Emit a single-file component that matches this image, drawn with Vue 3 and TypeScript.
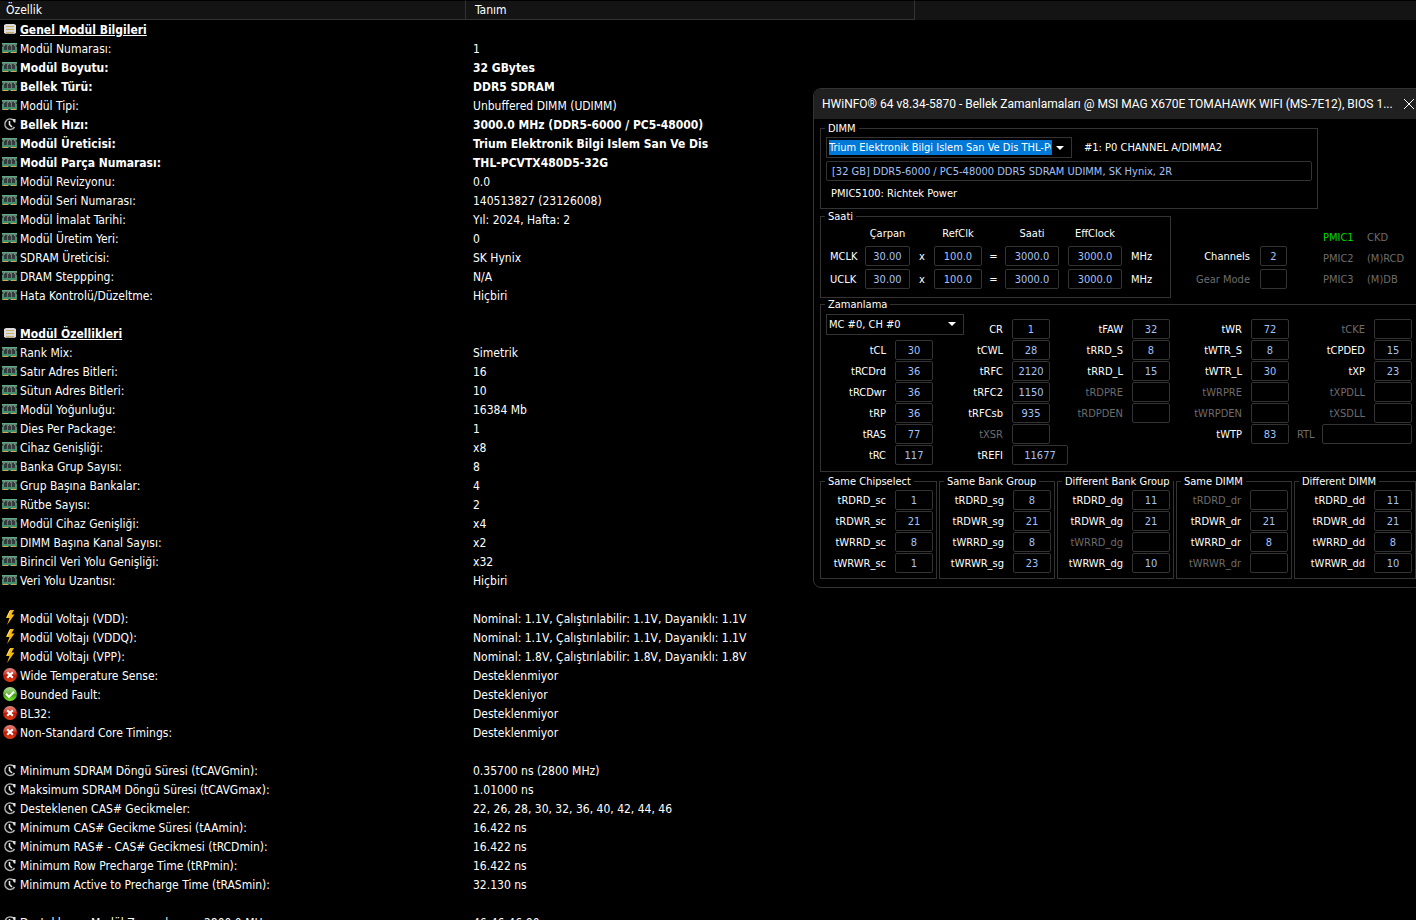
<script setup lang="ts">
type IconName = 'disc' | 'ram' | 'clock' | 'bolt' | 'cross' | 'tick'

interface Row {
  icon?: IconName
  name?: string
  value?: string
  bold?: boolean
  heading?: boolean
}

interface Field {
  label: string
  value: string
  col: number
  row: number
  wide?: boolean
}

const ram = (name: string, value: string, bold = false): Row => ({ icon: 'ram', name, value, bold })
const clock = (name: string, value: string, bold = false): Row => ({ icon: 'clock', name, value, bold })

const rows: Row[] = [
  { icon: 'disc', name: 'Genel Modül Bilgileri', heading: true },
  ram('Modül Numarası:', '1'),
  ram('Modül Boyutu:', '32 GBytes', true),
  ram('Bellek Türü:', 'DDR5 SDRAM', true),
  ram('Modül Tipi:', 'Unbuffered DIMM (UDIMM)'),
  clock('Bellek Hızı:', '3000.0 MHz (DDR5-6000 / PC5-48000)', true),
  ram('Modül Üreticisi:', 'Trium Elektronik Bilgi Islem San Ve Dis', true),
  ram('Modül Parça Numarası:', 'THL-PCVTX480D5-32G', true),
  ram('Modül Revizyonu:', '0.0'),
  ram('Modül Seri Numarası:', '140513827 (23126008)'),
  ram('Modül İmalat Tarihi:', 'Yıl: 2024, Hafta: 2'),
  ram('Modül Üretim Yeri:', '0'),
  ram('SDRAM Üreticisi:', 'SK Hynix'),
  ram('DRAM Steppping:', 'N/A'),
  ram('Hata Kontrolü/Düzeltme:', 'Hiçbiri'),
  {},
  { icon: 'disc', name: 'Modül Özellikleri', heading: true },
  ram('Rank Mix:', 'Simetrik'),
  ram('Satır Adres Bitleri:', '16'),
  ram('Sütun Adres Bitleri:', '10'),
  ram('Modül Yoğunluğu:', '16384 Mb'),
  ram('Dies Per Package:', '1'),
  ram('Cihaz Genişliği:', 'x8'),
  ram('Banka Grup Sayısı:', '8'),
  ram('Grup Başına Bankalar:', '4'),
  ram('Rütbe Sayısı:', '2'),
  ram('Modül Cihaz Genişliği:', 'x4'),
  ram('DIMM Başına Kanal Sayısı:', 'x2'),
  ram('Birincil Veri Yolu Genişliği:', 'x32'),
  ram('Veri Yolu Uzantısı:', 'Hiçbiri'),
  {},
  { icon: 'bolt', name: 'Modül Voltajı (VDD):', value: 'Nominal: 1.1V, Çalıştırılabilir: 1.1V, Dayanıklı: 1.1V' },
  { icon: 'bolt', name: 'Modül Voltajı (VDDQ):', value: 'Nominal: 1.1V, Çalıştırılabilir: 1.1V, Dayanıklı: 1.1V' },
  { icon: 'bolt', name: 'Modül Voltajı (VPP):', value: 'Nominal: 1.8V, Çalıştırılabilir: 1.8V, Dayanıklı: 1.8V' },
  { icon: 'cross', name: 'Wide Temperature Sense:', value: 'Desteklenmiyor' },
  { icon: 'tick', name: 'Bounded Fault:', value: 'Destekleniyor' },
  { icon: 'cross', name: 'BL32:', value: 'Desteklenmiyor' },
  { icon: 'cross', name: 'Non-Standard Core Timings:', value: 'Desteklenmiyor' },
  {},
  clock('Minimum SDRAM Döngü Süresi (tCAVGmin):', '0.35700 ns (2800 MHz)'),
  clock('Maksimum SDRAM Döngü Süresi (tCAVGmax):', '1.01000 ns'),
  clock('Desteklenen CAS# Gecikmeler:', '22, 26, 28, 30, 32, 36, 40, 42, 44, 46'),
  clock('Minimum CAS# Gecikme Süresi (tAAmin):', '16.422 ns'),
  clock('Minimum RAS# - CAS# Gecikmesi (tRCDmin):', '16.422 ns'),
  clock('Minimum Row Precharge Time (tRPmin):', '16.422 ns'),
  clock('Minimum Active to Precharge Time (tRASmin):', '32.130 ns'),
  {},
  clock('Desteklenen Modül Zamanlaması 2800.0 MHz:', '46-46-46-90'),
]

const clocks = [
  { name: 'MCLK', ratio: '30.00', ref: '100.0', clock: '3000.0', eff: '3000.0' },
  { name: 'UCLK', ratio: '30.00', ref: '100.0', clock: '3000.0', eff: '3000.0' },
]

const columns: [number, number, [string, string][]][] = [
  [1, 2, [['tCL', '30'], ['tRCDrd', '36'], ['tRCDwr', '36'], ['tRP', '36'], ['tRAS', '77'], ['tRC', '117']]],
  [2, 1, [['CR', '1'], ['tCWL', '28'], ['tRFC', '2120'], ['tRFC2', '1150'], ['tRFCsb', '935'], ['tXSR', ''], ['tREFI', '11677']]],
  [3, 1, [['tFAW', '32'], ['tRRD_S', '8'], ['tRRD_L', '15'], ['tRDPRE', ''], ['tRDPDEN', '']]],
  [4, 1, [['tWR', '72'], ['tWTR_S', '8'], ['tWTR_L', '30'], ['tWRPRE', ''], ['tWRPDEN', ''], ['tWTP', '83']]],
  [5, 1, [['tCKE', ''], ['tCPDED', '15'], ['tXP', '23'], ['tXPDLL', ''], ['tXSDLL', '']]],
]

const timings: Field[] = columns.flatMap(([col, first, items]) =>
  items.map(([label, value], i) => ({ label, value, col, row: first + i, wide: label === 'tREFI' })),
)

const groups: { title: string; suffix: string; values: string[] }[] = [
  { title: 'Same Chipselect', suffix: 'sc', values: ['1', '21', '8', '1'] },
  { title: 'Same Bank Group', suffix: 'sg', values: ['8', '21', '8', '23'] },
  { title: 'Different Bank Group', suffix: 'dg', values: ['11', '21', '', '10'] },
  { title: 'Same DIMM', suffix: 'dr', values: ['', '21', '8', ''] },
  { title: 'Different DIMM', suffix: 'dd', values: ['11', '21', '8', '10'] },
]
const pairs = ['tRDRD', 'tRDWR', 'tWRRD', 'tWRWR']

const chips = [
  ['PMIC1', 'CKD'],
  ['PMIC2', '(M)RCD'],
  ['PMIC3', '(M)DB'],
]
</script>

<template>
  <main class="page">
    <svg class="defs" aria-hidden="true">
      <defs>
        <linearGradient id="red" x1="0" y1="0" x2="0" y2="1">
          <stop offset="0" stop-color="#e58a80" /><stop offset="0.45" stop-color="#cf3a2a" /><stop offset="0.55" stop-color="#b81400" /><stop offset="1" stop-color="#e8411c" />
        </linearGradient>
        <linearGradient id="green" x1="0" y1="0" x2="0" y2="1">
          <stop offset="0" stop-color="#b4dd9a" /><stop offset="0.45" stop-color="#6fbb45" /><stop offset="0.55" stop-color="#3f9c12" /><stop offset="1" stop-color="#7fe82c" />
        </linearGradient>
        <g id="disc">
          <path d="M4 3h8l2 1v8l-2 1H4l-2-1V4z" fill="#dcdcdc" />
          <path d="M4 5.500h8M4 8.500h8M4 11.500h8" stroke="#cdb066" stroke-width="1" />
          <path d="M4 12.500h8" stroke="#a8a8a8" />
        </g>
        <g id="ram">
          <path d="M0 3h15v2l-1 1 1 1v6H8.500l-1-1-1 1H0V7l1-1-1-1z" fill="#468f6d" />
          <path d="M0 3.500h15" stroke="#5fab87" />
          <path d="M2 5h3v5H2zM6 5h3v5H6zM10 5h3v5h-3z" fill="#343c3e" />
          <path d="M2.500 4v2M6.500 4v2M8.500 4v2M12.500 4v2" stroke="#7b8580" />
          <path d="M1 12.500h5M9 12.500h5" stroke="#dd9f58" />
        </g>
        <g id="clock" fill="none" stroke="#b4b4b4">
          <path d="M10.500 3.500A5.200 5.200 0 1 0 12.500 11" stroke-width="1.600" />
          <path d="M7.500 5V8.500L10 11" stroke="#e8e8e8" stroke-width="1.600" />
          <path d="M10 3h3.500v3.500H12z" fill="#e0e0e0" stroke="none" />
        </g>
        <g id="bolt">
          <path d="M8 0h4L9.500 4.500H12.500L5 15l2.500-7H4z" fill="#f5b914" />
          <path d="M8 1L5 7.500" stroke="#ffe27a" />
        </g>
        <g id="cross">
          <circle cx="8" cy="8" r="7" fill="url(#red)" />
          <path d="M5.200 5.200l5.600 5.600M10.800 5.200L5.200 10.800" stroke="#fff" stroke-width="2.200" />
        </g>
        <g id="tick">
          <circle cx="8" cy="8" r="7" fill="url(#green)" />
          <path d="M4 7.800L7 10.800l5-5" fill="none" stroke="#fff" stroke-width="2.200" />
        </g>
      </defs>
    </svg>

    <table class="list">
      <colgroup>
        <col class="c-name" />
        <col class="c-value" />
        <col />
      </colgroup>
      <thead>
        <tr>
          <th scope="col">Özellik</th>
          <th scope="col">Tanım</th>
          <td></td>
        </tr>
      </thead>
      <tbody>
        <tr v-for="(r, i) in rows" :key="i" :class="{ bold: r.bold, heading: r.heading }">
          <td>
            <div class="name">
              <svg v-if="r.icon" class="icon" viewBox="0 0 16 16" aria-hidden="true"><use :href="'#' + r.icon" /></svg>
              <span>{{ r.name }}</span>
            </div>
          </td>
          <td class="value">{{ r.value }}</td>
          <td></td>
        </tr>
      </tbody>
    </table>

    <section class="window" aria-labelledby="title">
      <header class="titlebar">
        <h1 id="title">HWiNFO® 64 v8.34-5870 - Bellek Zamanlamaları @ MSI MAG X670E TOMAHAWK WIFI (MS-7E12), BIOS 1...</h1>
        <button type="button" class="close" aria-label="Kapat">
          <svg viewBox="0 0 10 10" aria-hidden="true"><path d="M0 0L10 10M10 0L0 10" stroke="#fff" fill="none" /></svg>
        </button>
      </header>

      <div class="body">
        <fieldset class="dimm">
          <legend>DIMM</legend>
          <div class="dimm-body">
            <div class="dimm-pick">
              <div class="combo combo-dimm">
                <select aria-label="DIMM">
                  <option>Trium Elektronik Bilgi Islem San Ve Dis THL-PCVTX480D5-32G</option>
                </select>
                <svg class="arrow" viewBox="0 0 8 4" aria-hidden="true"><path d="M0 0h8L4 4z" fill="#fff" /></svg>
              </div>
              <span>#1: P0 CHANNEL A/DIMMA2</span>
            </div>
            <input class="box info" readonly aria-label="Modül" value="[32 GB] DDR5-6000 / PC5-48000 DDR5 SDRAM UDIMM, SK Hynix, 2R" />
            <p class="pmic">PMIC5100: Richtek Power</p>
          </div>
        </fieldset>

        <div class="middle">
          <fieldset>
            <legend>Saati</legend>
            <div class="clocks">
              <span></span><span class="head">Çarpan</span><span></span><span class="head">RefClk</span><span></span>
              <span class="head">Saati</span><span></span><span class="head">EffClock</span><span></span>
              <template v-for="c in clocks" :key="c.name">
                <span class="clk-name">{{ c.name }}</span>
                <input class="box" readonly :aria-label="c.name + ' Çarpan'" :value="c.ratio" />
                <span class="sign">x</span>
                <input class="box" readonly :aria-label="c.name + ' RefClk'" :value="c.ref" />
                <span class="sign">=</span>
                <input class="box" readonly :aria-label="c.name + ' Saati'" :value="c.clock" />
                <span></span>
                <input class="box" readonly :aria-label="c.name + ' EffClock'" :value="c.eff" />
                <span class="unit">MHz</span>
              </template>
            </div>
          </fieldset>
          <div class="channels">
            <label for="channels">Channels</label>
            <input id="channels" class="box" readonly value="2" />
            <label for="gear" class="off">Gear Mode</label>
            <input id="gear" class="box" disabled value="" />
          </div>
          <div class="chips">
            <template v-for="(pair, i) in chips" :key="i">
              <span :class="i === 0 ? 'on' : 'off'">{{ pair[0] }}</span>
              <span class="off">{{ pair[1] }}</span>
            </template>
          </div>
        </div>

        <fieldset class="timing-set">
          <legend>Zamanlama</legend>
          <div class="timings">
            <div class="combo combo-mc">
              <select aria-label="Kanal">
                <option>MC #0, CH #0</option>
              </select>
              <svg class="arrow" viewBox="0 0 8 4" aria-hidden="true"><path d="M0 0h8L4 4z" fill="#fff" /></svg>
            </div>
            <template v-for="t in timings" :key="t.label">
              <label :for="t.label" :class="['t-label', 'l' + t.col, 'r' + t.row, { off: !t.value }]">{{ t.label }}</label>
              <input :id="t.label" :class="['box', 'v' + t.col, 'r' + t.row, { wide: t.wide }]" readonly :disabled="!t.value" :value="t.value" />
            </template>
            <div class="rtl r6">
              <label for="rtl" class="off">RTL</label>
              <input id="rtl" class="box" disabled value="" />
            </div>
          </div>
        </fieldset>

        <div class="groups">
          <fieldset v-for="g in groups" :key="g.suffix">
            <legend>{{ g.title }}</legend>
            <div class="group">
              <template v-for="(p, i) in pairs" :key="p">
                <label :for="p + g.suffix" :class="{ off: !g.values[i] }">{{ p }}_{{ g.suffix }}</label>
                <input :id="p + g.suffix" class="box" readonly :disabled="!g.values[i]" :value="g.values[i]" />
              </template>
            </div>
          </fieldset>
        </div>
      </div>
    </section>
  </main>
</template>

<style>
html,
body {
  background: #000;
}
</style>

<style scoped>
* {
  box-sizing: border-box;
}
.page {
  position: relative;
  height: 100vh;
  overflow: hidden;
  background: #000;
  color: #fff;
  font-family: "DejaVu Sans Condensed", "DejaVu Sans", sans-serif;
  font-size: 12px;
}
.defs {
  position: absolute;
  width: 0;
  height: 0;
}

.list {
  width: 100%;
  table-layout: fixed;
  border-collapse: separate;
  border-spacing: 0;
}
.c-name {
  width: 466px;
}
.c-value {
  width: 449px;
}
.list thead th,
.list thead td {
  height: 20px;
  padding: 0;
  background: #141414;
  border-top: 1px solid #000;
}
.list th {
  font-weight: normal;
  text-align: left;
  line-height: 16px;
  border-right: 1px solid #333;
  border-bottom: 1px solid #333;
}
.list thead th:first-child {
  padding-left: 6px;
}
.list thead th:nth-child(2) {
  padding-left: 9px;
}
.list tbody td {
  height: 19px;
  padding: 0;
  line-height: 17px;
  white-space: nowrap;
}
.list tbody td.value {
  padding: 2px 0 0 7px;
}
.name {
  display: flex;
  gap: 2px;
  height: 19px;
  padding-left: 2px;
}
.name span {
  padding-top: 2px;
}
.icon {
  width: 16px;
  height: 16px;
  margin-top: 1px;
}
.bold,
.heading {
  font-weight: bold;
}
.heading span {
  text-decoration: underline;
}

.window {
  position: absolute;
  top: 88px;
  left: 813px;
  right: -7px;
  border: 1px solid #333;
  border-radius: 8px;
  background: #000;
  overflow: hidden;
  font-size: 11px;
  line-height: 13px;
}
.titlebar {
  display: flex;
  align-items: center;
  height: 30px;
  padding: 0 8px;
  background: #202020;
}
.titlebar h1 {
  flex: 1;
  min-width: 0;
  margin: 0;
  font: 12px Roboto, sans-serif;
  white-space: nowrap;
}
.close {
  display: flex;
  padding: 0;
  border: 0;
  background: none;
}
.close svg {
  width: 10px;
  height: 10px;
}
.body {
  padding: 3px 5px 8px 6px;
}
fieldset {
  min-width: 0;
  margin: 0;
  padding: 0;
  border: 1px solid #333;
}
legend {
  margin-left: 4px;
  padding: 0 3px;
  white-space: nowrap;
}
.box {
  width: 100%;
  min-width: 0;
  height: 20px;
  margin: 0;
  padding: 0;
  border: 1px solid #333;
  border-radius: 2px;
  background: #000;
  color: #a4c2f8;
  font: inherit;
  text-align: center;
  outline: 0;
}
.off {
  color: #6d6d6d;
}
.on {
  color: #00d800;
}

.dimm {
  width: 498px;
  height: 87px;
}
.dimm-body {
  padding: 2px 5px 0;
}
.dimm-pick {
  display: flex;
  align-items: center;
  gap: 12px;
  margin-bottom: 3px;
}
.combo {
  display: grid;
  align-items: center;
}
.combo > * {
  grid-area: 1 / 1;
}
.combo select {
  width: 100%;
  height: 21px;
  padding: 0 20px 0 2px;
  border: 1px solid #333;
  border-radius: 0;
  background: #000;
  color: #fff;
  font: inherit;
  appearance: none;
}
.arrow {
  justify-self: end;
  width: 8px;
  height: 4px;
  margin-right: 8px;
  pointer-events: none;
}
.combo-dimm {
  width: 246px;
}
.combo-dimm select {
  background: linear-gradient(#0078d7, #0078d7) 2px 2px / 223px 15px no-repeat #000;
}
.info {
  padding-left: 5px;
  text-align: left;
}
.pmic {
  margin: 6px 0 0 5px;
}

.middle {
  display: flex;
  margin-top: 1px;
}
.middle fieldset {
  flex: none;
  height: 88px;
}
.clocks {
  display: grid;
  grid-template-columns: 44px 45px 24px 48px 23px 54px 9px 54px 48px;
  grid-template-rows: 20px 20px 20px;
  row-gap: 3px;
  align-items: center;
}
.head {
  justify-self: center;
}
.clk-name {
  padding-left: 9px;
}
.sign {
  text-align: center;
}
.unit {
  padding-left: 9px;
}
.channels {
  display: grid;
  grid-template-columns: 79px 27px;
  grid-template-rows: 20px 20px;
  gap: 3px 10px;
  align-items: center;
  align-content: start;
  justify-items: end;
  padding-top: 36px;
}
.chips {
  display: grid;
  grid-template-columns: 44px 1fr;
  grid-auto-rows: 21px;
  align-content: start;
  align-items: center;
  padding: 17px 0 0 36px;
}

.timing-set {
  height: 174px;
}
.timings {
  display: grid;
  grid-template-columns: 74px 38px 79px 38px 82px 38px 81px 38px 85px 38px;
  grid-template-rows: repeat(7, 20px);
  row-gap: 1px;
  padding-top: 8px;
  align-items: center;
}
.combo-mc {
  grid-area: 1 / 1 / 2 / 4;
  width: 138px;
  margin: -10px 0 0 5px;
}
.t-label {
  justify-self: end;
  padding-right: 9px;
}
.l1 { grid-column: 1; }
.v1 { grid-column: 2; }
.l2 { grid-column: 3; }
.v2 { grid-column: 4; }
.l3 { grid-column: 5; }
.v3 { grid-column: 6; }
.l4 { grid-column: 7; }
.v4 { grid-column: 8; }
.l5 { grid-column: 9; }
.v5 { grid-column: 10; }
.r1 { grid-row: 1; }
.r2 { grid-row: 2; }
.r3 { grid-row: 3; }
.r4 { grid-row: 4; }
.r5 { grid-row: 5; }
.r6 { grid-row: 6; }
.r7 { grid-row: 7; }
.box.wide {
  grid-column: 4 / 6;
  width: 56px;
}
.rtl {
  grid-column: 9 / 11;
  display: grid;
  grid-template-columns: 1fr 90px;
  align-items: center;
  padding-left: 8px;
}

.groups {
  display: grid;
  grid-template-columns: 117px 116px 117px 116px 122px;
  column-gap: 2px;
  margin-top: 3px;
}
.groups fieldset {
  height: 104px;
}
.group {
  display: grid;
  grid-template-columns: 1fr 38px;
  grid-auto-rows: 20px;
  gap: 1px 9px;
  align-items: center;
  justify-items: end;
  padding: 2px 3px 0 0;
}
</style>
